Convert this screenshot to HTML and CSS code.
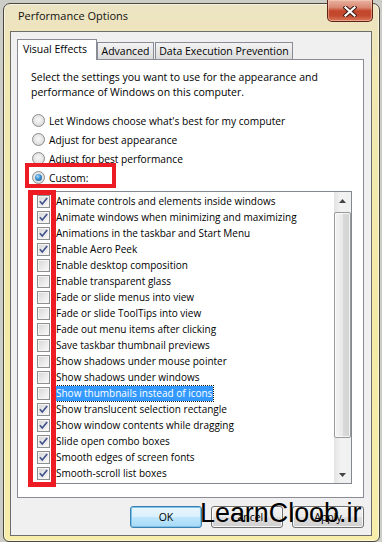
FILE: index.html
```html
<!DOCTYPE html>
<html lang="en">
<head>
    <meta charset="UTF-8">
    <title>Performance Options</title>
    <link rel="stylesheet" href="styles.css">
</head>
<body>
    <div class="window">
        <div class="titlebar">
            <span class="title">Performance Options</span>
            <div class="close">
                <svg width="14" height="11" viewBox="0 0 14 11">
                    <path d="M2.5 1.5 L11.5 9.5 M11.5 1.5 L2.5 9.5" stroke="#3a1a14" stroke-width="4.2" stroke-linecap="square"/>
                    <path d="M2.5 1.5 L11.5 9.5 M11.5 1.5 L2.5 9.5" stroke="#fff" stroke-width="2.2" stroke-linecap="square"/>
                </svg>
            </div>
        </div>

        <div class="client">
            <div class="tabs">
                <div class="tab active">Visual Effects</div>
                <div class="tab tab-adv">Advanced</div>
                <div class="tab tab-dep">Data Execution Prevention</div>
            </div>

            <div class="panel">
                <p class="intro">Select the settings you want to use for the appearance and<br>performance of Windows on this computer.</p>

                <div class="radios">
                    <div class="radio"><span class="dot"></span>Let Windows choose what's best for my computer</div>
                    <div class="radio"><span class="dot"></span>Adjust for best appearance</div>
                    <div class="radio"><span class="dot"></span>Adjust for best performance</div>
                    <div class="radio"><span class="dot on"></span>Custom:</div>
                </div>

                <div class="listbox">
                    <ul class="items">
                        <li><span class="box"><svg viewBox="0 0 11 11"><path d="M1.8 5.2 L4.3 8 L9.2 2"/></svg></span>Animate controls and elements inside windows</li>
                        <li><span class="box"><svg viewBox="0 0 11 11"><path d="M1.8 5.2 L4.3 8 L9.2 2"/></svg></span>Animate windows when minimizing and maximizing</li>
                        <li><span class="box"><svg viewBox="0 0 11 11"><path d="M1.8 5.2 L4.3 8 L9.2 2"/></svg></span>Animations in the taskbar and Start Menu</li>
                        <li><span class="box"><svg viewBox="0 0 11 11"><path d="M1.8 5.2 L4.3 8 L9.2 2"/></svg></span>Enable Aero Peek</li>
                        <li><span class="box"></span>Enable desktop composition</li>
                        <li><span class="box"></span>Enable transparent glass</li>
                        <li><span class="box"></span>Fade or slide menus into view</li>
                        <li><span class="box"></span>Fade or slide ToolTips into view</li>
                        <li><span class="box"></span>Fade out menu items after clicking</li>
                        <li><span class="box"></span>Save taskbar thumbnail previews</li>
                        <li><span class="box"></span>Show shadows under mouse pointer</li>
                        <li><span class="box"></span>Show shadows under windows</li>
                        <li><span class="box"></span><span class="selected">Show thumbnails instead of icons</span></li>
                        <li><span class="box"><svg viewBox="0 0 11 11"><path d="M1.8 5.2 L4.3 8 L9.2 2"/></svg></span>Show translucent selection rectangle</li>
                        <li><span class="box"><svg viewBox="0 0 11 11"><path d="M1.8 5.2 L4.3 8 L9.2 2"/></svg></span>Show window contents while dragging</li>
                        <li><span class="box"><svg viewBox="0 0 11 11"><path d="M1.8 5.2 L4.3 8 L9.2 2"/></svg></span>Slide open combo boxes</li>
                        <li><span class="box"><svg viewBox="0 0 11 11"><path d="M1.8 5.2 L4.3 8 L9.2 2"/></svg></span>Smooth edges of screen fonts</li>
                        <li><span class="box"><svg viewBox="0 0 11 11"><path d="M1.8 5.2 L4.3 8 L9.2 2"/></svg></span>Smooth-scroll list boxes</li>
                    </ul>
                    <div class="scrollbar">
                        <div class="arrow"><svg width="7" height="4" viewBox="0 0 7 4"><path d="M0 4 L3.5 0 L7 4 Z" fill="#444"/></svg></div>
                        <div class="track"><div class="thumb"></div></div>
                        <div class="arrow"><svg width="7" height="4" viewBox="0 0 7 4"><path d="M0 0 L7 0 L3.5 4 Z" fill="#444"/></svg></div>
                    </div>
                </div>
            </div>

            <div class="buttons">
                <div class="btn default">OK</div>
                <div class="btn">Cancel</div>
                <div class="btn">Apply</div>
            </div>
        </div>

        <!-- red markers drawn over the screenshot -->
        <div class="mark mark-custom"></div>
        <div class="mark mark-checks"></div>
        <div class="watermark">LearnCloob.ir</div>
    </div>
</body>
</html>
```

FILE: styles.css
```css
* {
    margin: 0;
    padding: 0;
    box-sizing: border-box;
}
body {
    background: #cdcdc8;
    font-family: "Open Sans", "Noto Sans", sans-serif;
    font-size: 10.5px;
    color: #000;
    overflow: hidden;
}
.window {
    position: relative;
    margin: 3px 0 0 3px;
    width: 377px;
    height: 539px;
    border: 1px solid #4a473c;
    border-radius: 7px 7px 6px 6px;
    background: linear-gradient(to bottom, #ece3c4 0%, #f1e8b3 12%, #f3eaa6 60%, #f6eeaa 100%);
    box-shadow: inset 0 0 0 1px rgba(255, 255, 255, 0.55);
    padding: 0 7px 5px 6px;
    display: flex;
    flex-direction: column;
}
.titlebar {
    height: 27px;
    padding: 4px 0 0 8px;
    flex-shrink: 0;
}
.title {
    font-size: 11px;
    color: #111;
}
.close {
    position: absolute;
    top: -4px;
    left: 323px;
    width: 46px;
    height: 22px;
    border: 1px solid #5e2416;
    border-top: none;
    border-radius: 0 0 5px 5px;
    background: linear-gradient(to bottom, #e9b2a2 0%, #d98a74 35%, #c4462b 52%, #c34a2f 75%, #dc7a5c 100%);
    box-shadow: inset 0 0 0 1px rgba(255, 220, 200, 0.45);
    display: flex;
    justify-content: center;
    align-items: center;
    padding-top: 2px;
}
.client {
    flex: 1;
    border: 1px solid #6d6d6a;
    background: #f0f0f0;
    padding: 7px 7px 0 6px;
    display: flex;
    flex-direction: column;
}
.tabs {
    display: flex;
    align-items: flex-end;
    height: 21px;
    margin-bottom: -1px;
    position: relative;
    z-index: 1;
}
.tab {
    height: 17px;
    margin-bottom: 1px;
    border: 1px solid #898c95;
    border-bottom: none;
    background: linear-gradient(to bottom, #f3f3f3, #e6e6e6 60%, #dadada);
    text-align: center;
    line-height: 16px;
    white-space: nowrap;
}
.tab.active {
    width: 80px;
    height: 21px;
    margin-bottom: 0;
    background: #fff;
    line-height: 18px;
    padding-right: 4px;
}
.tab-adv {
    width: 57px;
}
.tab-dep {
    width: 138px;
    margin-left: 1px;
}
.panel {
    border: 1px solid #898c95;
    background: #fff;
    padding: 10px 11px 13px 13px;
}
.intro {
    line-height: 15px;
}
.radios {
    margin-top: 11px;
}
.radio {
    height: 19px;
    display: flex;
    align-items: center;
    white-space: nowrap;
    font-size: 10.2px;
}
.dot {
    width: 13px;
    height: 13px;
    margin: 0 4px 0 1px;
    border-radius: 50%;
    border: 1px solid #8a8b8c;
    background: radial-gradient(circle at 50% 45%, #f8f8f8 0%, #e4e4e4 55%, #c9c9c9 100%);
    display: flex;
    justify-content: center;
    align-items: center;
}
.dot.on::after {
    content: "";
    width: 7px;
    height: 7px;
    border-radius: 50%;
    background: radial-gradient(circle at 40% 35%, #a9dcfb 0%, #3d8fd0 45%, #0e4f8c 100%);
}
.listbox {
    margin-top: 4px;
    height: 293px;
    border: 1px solid #828790;
    display: flex;
}
.items {
    list-style: none;
    flex: 1;
    padding: 1px 0 0 5px;
    font-size: 10px;
}
.items li {
    height: 16px;
    display: flex;
    align-items: center;
    white-space: nowrap;
}
.box {
    width: 13px;
    height: 13px;
    margin-right: 6px;
    border: 1px solid #8e8f8f;
    background: linear-gradient(135deg, #d6d6d6, #f4f4f4 80%, #fdfdfd);
    box-shadow: inset 0 0 0 1px #f4f4f4;
    display: flex;
    justify-content: center;
    align-items: center;
    flex-shrink: 0;
}
.box svg {
    width: 11px;
    height: 11px;
    fill: none;
    stroke: #42548d;
    stroke-width: 1.7;
}
.selected {
    background: #3399ff;
    color: #fff;
    line-height: 15px;
    padding: 0 1px;
    margin-left: -1px;
    outline: 1px dotted #1a1a1a;
}
.scrollbar {
    width: 17px;
    display: flex;
    flex-direction: column;
    background: linear-gradient(to right, #e3e3e3, #f2f2f2 40%, #f0f0f0);
}
.arrow {
    height: 17px;
    display: flex;
    justify-content: center;
    align-items: center;
}
.track {
    flex: 1;
    padding: 3px 0 0 0;
}
.thumb {
    height: 226px;
    border: 1px solid #9a9a9a;
    border-radius: 2px;
    background: linear-gradient(to right, #f4f4f4, #e9e9e9 50%, #d9d9d9 51%, #d3d3d3);
    box-shadow: inset 0 0 0 1px rgba(255, 255, 255, 0.7);
}
.buttons {
    margin-top: 8px;
    display: flex;
    justify-content: flex-end;
    gap: 9px;
}
.btn {
    width: 72px;
    height: 22px;
    border: 1px solid #707070;
    border-radius: 3px;
    background: linear-gradient(to bottom, #f2f2f2 0%, #ebebeb 48%, #dddddd 52%, #cfcfcf 100%);
    box-shadow: inset 0 0 0 1px rgba(255, 255, 255, 0.8);
    text-align: center;
    line-height: 20px;
}
.btn.default {
    border-color: #3c7fb1;
    background: linear-gradient(to bottom, #eaf6fd 0%, #d9f0fc 48%, #bee6fd 52%, #a7d9f5 100%);
    box-shadow: inset 0 0 0 1px #7ec4ea;
}
.mark {
    position: absolute;
    border-style: solid;
    border-color: #ed1c24;
}
.mark-custom {
    left: 21px;
    top: 159px;
    width: 91px;
    height: 25px;
    border-width: 4px;
}
.mark-checks {
    left: 24px;
    top: 186px;
    width: 28px;
    height: 297px;
    border-width: 5px;
}
.watermark {
    position: absolute;
    left: 196px;
    top: 495px;
    font-family: "Liberation Sans", Arial, sans-serif;
    font-size: 28px;
    line-height: 28px;
    color: #000;
    white-space: nowrap;
    transform: scaleX(0.96);
    transform-origin: left top;
}
```
